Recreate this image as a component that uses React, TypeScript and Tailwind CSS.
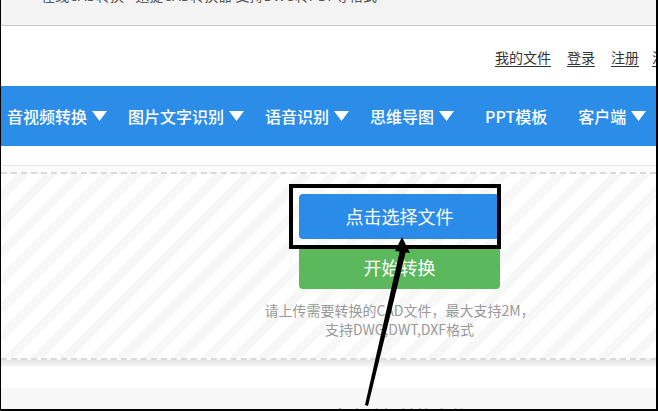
const navItems = [
  { label: '音视频转换', caret: true },
  { label: '图片文字识别', caret: true },
  { label: '语音识别', caret: true },
  { label: '思维导图', caret: true },
  { label: 'PPT模板', caret: false },
  { label: '客户端', caret: true },
];

const Caret = () => (
  <svg width="15" height="10" viewBox="0 0 15 10" className="shrink-0">
    <polygon points="0,0 15,0 7.5,10" fill="#fff" />
  </svg>
);

const App = () => {
  return (
    <div
      className="relative w-[658px] h-[411px] overflow-hidden bg-white border-l border-r-2 border-b-2 border-black"
      style={{ fontFamily: '"Noto Sans CJK SC", "Noto Sans", sans-serif' }}
    >
      {/* browser strip at the top, cut off */}
      <div className="h-[26px] bg-[#f3f3f3] border-b border-[#c9c9c9] overflow-hidden">
        <div className="-mt-[13px] pl-[40px] text-[14px] leading-[16px] text-[#555] whitespace-nowrap">
          在线CAD转换 - 迅捷CAD转换器 支持DWG转PDF等格式
        </div>
      </div>

      {/* header links */}
      <div className="h-[60px] flex items-center justify-end overflow-hidden">
        <div className="flex gap-[16px] text-[14px] text-[#333] -mr-[24px] pt-[2px]">
          <a className="underline underline-offset-[3px]">我的文件</a>
          <a className="underline underline-offset-[3px]">登录</a>
          <a className="underline underline-offset-[3px]">注册</a>
          <a className="underline underline-offset-[3px] -ml-[3px]">注销</a>
        </div>
      </div>

      {/* nav */}
      <div className="h-[60px] bg-[#2c8de8] flex items-center pl-[6px] gap-[21px] whitespace-nowrap">
        {navItems.map((item) => (
          <div
            key={item.label}
            className={`flex items-center gap-[5px] text-white text-[16px] font-medium ${item.caret ? '' : 'mx-[10px]'}`}
          >
            <span>{item.label}</span>
            {item.caret && <Caret />}
          </div>
        ))}
      </div>

      <div className="h-[20px] bg-white border-b border-[#e6e6e6]" />
      <div className="h-[6px] bg-[#fbfbfb]" />

      {/* upload area */}
      <div className="h-[188px] border-y-2 border-dashed border-[#dadada] bg-[repeating-linear-gradient(135deg,#ffffff_0,#ffffff_11px,#f7f7f7_11px,#f7f7f7_20px)] flex justify-center pl-[142px]">
        <div className="flex flex-col items-center">
          <button className="mt-[20px] w-[201px] h-[45px] rounded-[4px] bg-[#2b8be8] text-white text-[18px]">
            点击选择文件
          </button>
          <button className="mt-[7px] w-[201px] h-[43px] rounded-[4px] bg-[#5cb85c] text-white text-[18px]">
            开始转换
          </button>
          <p className="mt-[12px] text-[14px] leading-[19px] text-[#9a9a9a] text-center whitespace-nowrap">
            请上传需要转换的CAD文件，最大支持2M，
            <br />
            支持DWG,DWT,DXF格式
          </p>
        </div>
      </div>

      {/* below the area */}
      <div className="h-[7px] bg-gradient-to-b from-[#e4e4e4] to-[#fafafa]" />
      <div className="h-[21px] bg-white" />
      <div className="h-[30px] bg-[#f7f7f7] overflow-hidden flex justify-center pl-[142px]">
        <div className="mt-[15px] text-[17px] text-[#888]">点击选择转换文件</div>
      </div>

      {/* annotation: box and arrow */}
      <div className="absolute left-[288px] top-[184px] w-[212px] h-[65px] border-4 border-black" />
      <svg className="absolute inset-0 pointer-events-none" width="658" height="411">
        <polygon points="399,250 405,251 367,406 364,405" fill="#000" />
        <polygon points="401,237 409,253 394,251" fill="#000" />
      </svg>
    </div>
  );
};

export default App;
